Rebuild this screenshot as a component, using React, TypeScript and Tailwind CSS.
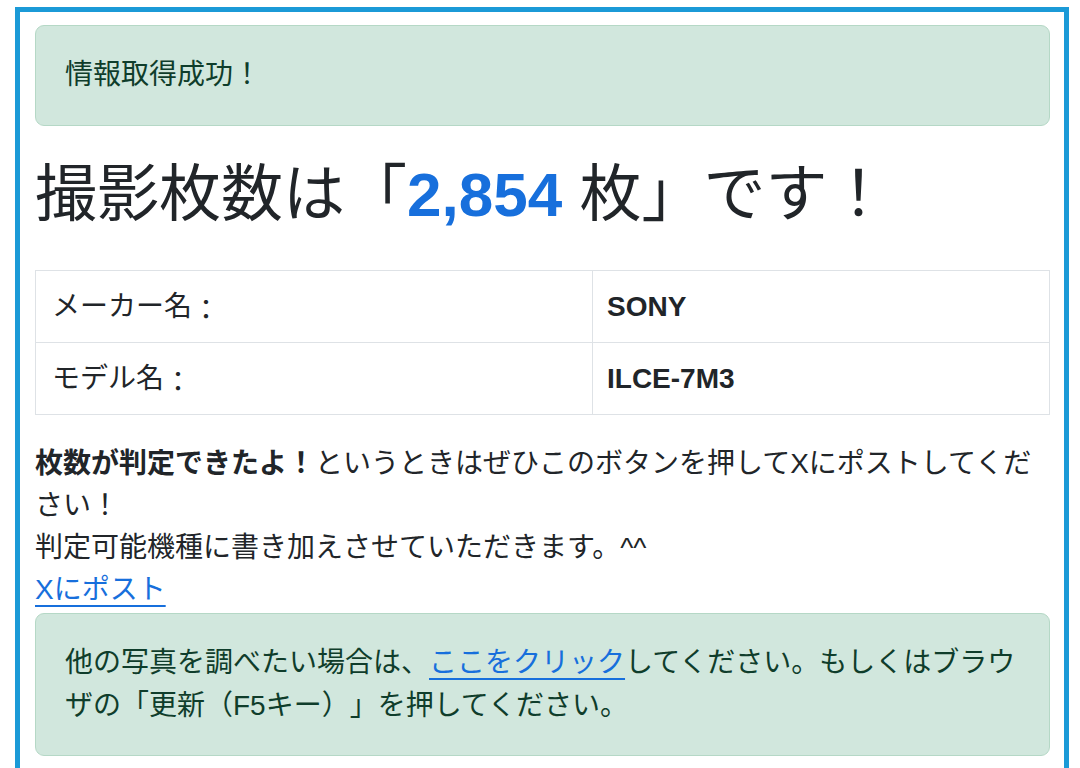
import React from "react";

const font = { fontFamily: '"Liberation Sans", "Noto Sans CJK JP", sans-serif' };

export default function App() {
  return (
    <div lang="ja" className="min-h-[768px] bg-white pt-[7px] pl-[15px] [text-spacing-trim:space-all]" style={font}>
      <div className="w-[1054px] min-h-[770px] border-[5px] border-b-0 border-[#1b9ad7] pl-[15px] pr-[14px] pt-[13px] text-[#212529]">
        <div className="rounded-[9px] border border-[#b5d8c6] bg-[#d1e7dd] pl-[29px] pr-4 pt-[28px] pb-[29px] text-[28px] leading-[42px] text-[#0f3d2b]">
          情報取得成功！
        </div>

        <h1 className="mt-[33px] text-[62px] leading-[72px] font-normal">
          撮影枚数は「<span className="font-bold text-[#176fdc]">2,854</span> 枚」です！
        </h1>

        <div className="mt-[39px] border border-[#dee2e6] text-[28px] leading-[42px]">
          <div className="flex h-[71px] items-center">
            <div className="flex h-full w-[557px] items-center border-r border-[#dee2e6] pl-4">
              メーカー名<span className="relative top-[4px]">：</span>
            </div>
            <div className="flex-1 pl-[14px] font-bold">SONY</div>
          </div>
          <div className="flex h-[72px] items-center border-t border-[#dee2e6]">
            <div className="flex h-full w-[557px] items-center border-r border-[#dee2e6] pl-4">
              モデル名<span className="relative top-[4px]">：</span>
            </div>
            <div className="flex-1 pl-[14px] font-bold">ILCE-7M3</div>
          </div>
        </div>

        <div className="mt-[28px] text-[28px] leading-[42px]">
          <p>
            <b className="font-bold">枚数が判定できたよ！</b>というときはぜひこのボタンを押してXにポストしてくだ
            <br />
            さい！
            <br />
            判定可能機種に書き加えさせていただきます。^^
          </p>
          <a href="#" className="text-[#176fdc] underline underline-offset-[6px] decoration-[1.5px]">
            Xにポスト
          </a>
        </div>

        <div className="mt-[2px] rounded-[9px] border border-[#b5d8c6] bg-[#d1e7dd] pl-[29px] pr-3 pt-[27px] pb-[28px] text-[28px] leading-[43px] text-[#0f3d2b]">
          他の写真を調べたい場合は、
          <a href="#" className="text-[#176fdc] underline underline-offset-[6px] decoration-[1.5px]">
            ここをクリック
          </a>
          してください。もしくはブラウザの「更新（F5キー）」を押してください。
        </div>
      </div>
    </div>
  );
}
